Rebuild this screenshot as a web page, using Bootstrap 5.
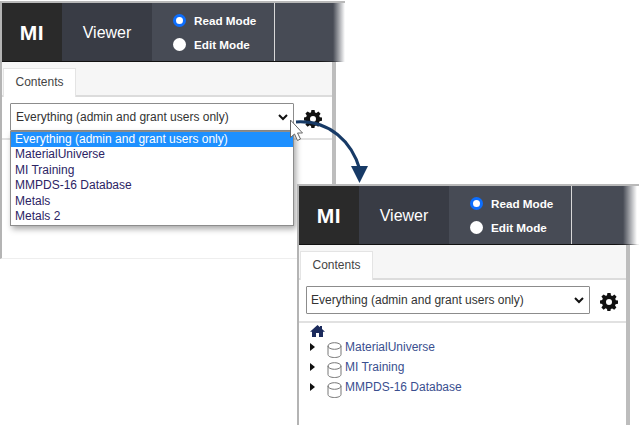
<!doctype html>
<html lang="en"><head><meta charset="utf-8"><title>MI Viewer</title>
<link href="https://cdn.jsdelivr.net/npm/bootstrap@5.3.0/dist/css/bootstrap.min.css" rel="stylesheet">
<style>
html,body{margin:0;background:#fff;width:639px;height:425px;overflow:hidden}
body{font-family:"Liberation Sans",Arial,sans-serif;position:relative}
.app-win{position:absolute;background:#fff;border-top:2px solid #b9b9b9}
.win-one{left:0;top:1px;width:345px;height:258px;border-left:2px solid #b4b4b4;border-bottom:1px solid #eee}
.win-two{left:297px;top:184px;width:342px;height:241px;border-left:2px solid #b4b4b4}
.app-head{height:59px;border-bottom:1px solid #111;border-image:linear-gradient(90deg,#111 315px,transparent 340px) 1}
.win-one .app-head{background:linear-gradient(90deg,#474b55 331px,#fff 343px)}
.win-two .app-head{background:linear-gradient(90deg,#474b55 324px,#fff 338px)}
.brand-box{width:60px;background:#2a2a2a;color:#fff;font-size:21px;font-weight:700;letter-spacing:.5px;padding-top:2px}
.view-box{width:90px;background:#393c45;color:#fff;font-size:16px;padding-top:1px}
.mode-box{width:123px;background:#474b55;border-right:1px solid #d8d8d8;color:#fff;font-size:11.700px;font-weight:700;padding:1px 0 0 21px;gap:6px}
.mode-dot{width:13px;height:13px;border-radius:50%;background:#fff;flex:none}
.mode-dot.on{border:3.500px solid #0d6efd}
.app-body{position:relative;height:196px;border-right:4px solid #bdbdbd;margin-right:9px}
.tab-strip{height:35px;background:#f6f6f6;border-bottom:2px solid #dcdcdc;padding:6px 0 0 1px}
.tab-one{width:73px;height:29px;background:#fff;border:1px solid #e4e4e4;border-bottom:0;font-size:12px;color:#444;line-height:26px;text-align:center}
.pick-row{height:43px;border-bottom:2px solid #e1e1e1;padding:6px 0 0 8px;background:#fff}
.win-two .pick-row{padding-left:7px}
.pick-box{width:284px;height:28px;border:1px solid #8c8c8c;font-size:12px;color:#333;padding:0 5px;background:#fff;border-radius:1px}
.win-two .pick-box{padding-left:4px}
.gear-icon{margin:7px 0 0 10px;flex:none}
.drop-list{position:absolute;left:8px;top:69px;width:284px;height:95px;background:#fff;border:1px solid #8d8d8d;box-shadow:2px 3px 6px rgba(0,0,0,.35);font-size:12px;color:#2c2464;line-height:15.400px}
.drop-list div{padding-left:4px;height:15.400px}
.drop-list .sel{background:#1e90ff;color:#fff}
.tree-area{padding:2px 0 0 11px;font-size:12px}
.tree-row{height:20px;color:#3a4f8f}
.tree-caret{width:0;height:0;border-left:5px solid #111;border-top:4px solid transparent;border-bottom:4px solid transparent;margin-right:12px}
.tree-cyl{margin:5px 3px 0 0;flex:none}
.arrow-art{position:absolute;left:285px;top:110px;pointer-events:none}
</style></head><body>

<section class="app-win win-one">
 <div class="app-head d-flex">
  <div class="brand-box d-flex align-items-center justify-content-center">MI</div>
  <div class="view-box d-flex align-items-center justify-content-center">Viewer</div>
  <div class="mode-box d-flex flex-column justify-content-center">
   <div class="d-flex align-items-center gap-2"><span class="mode-dot on"></span>Read Mode</div>
   <div class="d-flex align-items-center gap-2"><span class="mode-dot"></span>Edit Mode</div>
  </div>
 </div>
 <div class="app-body">
  <div class="tab-strip"><div class="tab-one">Contents</div></div>
  <div class="pick-row d-flex align-items-start">
   <div class="pick-box d-flex align-items-center justify-content-between">Everything (admin and grant users only)
    <svg width="10" height="7" viewBox="0 0 10 7"><path d="M1 1l4 4 4-4" fill="none" stroke="#111" stroke-width="2"/></svg></div>
   <svg class="gear-icon" width="18" height="18" viewBox="0 0 18 18"><path fill="#111" fill-rule="evenodd" d="M7.400 0h3.200l.4 2.400 1.400.6 2-1.400 2.200 2.200-1.400 2 .6 1.400 2.200.4v3.200l-2.400.4-.6 1.400 1.400 2-2.200 2.200-2-1.400-1.400.6-.4 2.300H7.400L7 15.900l-1.400-.6-2 1.400-2.200-2.200 1.400-2-.6-1.400L0 10.600V7.400L2.200 7l.6-1.400-1.400-2 2.200-2.200 2 1.400L7 2.400zM9 6a3 3 0 1 0 0 6 3 3 0 0 0 0-6z"/></svg>
  </div>
  <div class="drop-list">
   <div class="sel">Everything (admin and grant users only)</div>
   <div>MaterialUniverse</div><div>MI Training</div><div>MMPDS-16 Database</div><div>Metals</div><div>Metals 2</div>
  </div>
 </div>
</section>

<section class="app-win win-two">
 <div class="app-head d-flex">
  <div class="brand-box d-flex align-items-center justify-content-center">MI</div>
  <div class="view-box d-flex align-items-center justify-content-center">Viewer</div>
  <div class="mode-box d-flex flex-column justify-content-center">
   <div class="d-flex align-items-center gap-2"><span class="mode-dot on"></span>Read Mode</div>
   <div class="d-flex align-items-center gap-2"><span class="mode-dot"></span>Edit Mode</div>
  </div>
 </div>
 <div class="app-body">
  <div class="tab-strip"><div class="tab-one">Contents</div></div>
  <div class="pick-row d-flex align-items-start">
   <div class="pick-box d-flex align-items-center justify-content-between">Everything (admin and grant users only)
    <svg width="10" height="7" viewBox="0 0 10 7"><path d="M1 1l4 4 4-4" fill="none" stroke="#111" stroke-width="2"/></svg></div>
   <svg class="gear-icon" width="18" height="18" viewBox="0 0 18 18"><path fill="#111" fill-rule="evenodd" d="M7.400 0h3.200l.4 2.400 1.400.6 2-1.400 2.200 2.200-1.400 2 .6 1.400 2.200.4v3.200l-2.400.4-.6 1.400 1.400 2-2.200 2.200-2-1.400-1.400.6-.4 2.300H7.400L7 15.900l-1.400-.6-2 1.400-2.200-2.200 1.400-2-.6-1.400L0 10.600V7.400L2.200 7l.6-1.400-1.400-2 2.200-2.200 2 1.400L7 2.400zM9 6a3 3 0 1 0 0 6 3 3 0 0 0 0-6z"/></svg>
  </div>
  <div class="tree-area">
   <svg class="d-block" width="15" height="12" viewBox="0 0 15 12"><path fill="#1b2a5c" d="M7.500 0l2.500 2.200V1h2v3l3 2.700h-2V12H9V8H6v4H2V6.700H0z"/></svg>
   <div class="tree-row d-flex align-items-center"><span class="tree-caret"></span><svg class="tree-cyl" width="15" height="16" viewBox="0 0 15 16"><g fill="none" stroke="#777"><ellipse cx="7.500" cy="4" rx="6.500" ry="3.300"/><path d="M1 4v8.500c0 1.800 2.900 3 6.500 3s6.500-1.200 6.500-3V4"/></g></svg><span>MaterialUniverse</span></div>
   <div class="tree-row d-flex align-items-center"><span class="tree-caret"></span><svg class="tree-cyl" width="15" height="16" viewBox="0 0 15 16"><g fill="none" stroke="#777"><ellipse cx="7.500" cy="4" rx="6.500" ry="3.300"/><path d="M1 4v8.500c0 1.800 2.900 3 6.500 3s6.500-1.200 6.500-3V4"/></g></svg><span>MI Training</span></div>
   <div class="tree-row d-flex align-items-center"><span class="tree-caret"></span><svg class="tree-cyl" width="15" height="16" viewBox="0 0 15 16"><g fill="none" stroke="#777"><ellipse cx="7.500" cy="4" rx="6.500" ry="3.300"/><path d="M1 4v8.500c0 1.800 2.900 3 6.500 3s6.500-1.200 6.500-3V4"/></g></svg><span>MMPDS-16 Database</span></div>
  </div>
 </div>
</section>

<svg class="arrow-art" width="95" height="85" viewBox="285 110 95 85">
 <path d="M296 122C330 120 352 142 360 170" fill="none" stroke="#173a66" stroke-width="3"/>
 <path d="M351 166h17l-8.500 17z" fill="#173a66"/>
 <path d="M290.500 120v17.500l4-3.500 3 6.500 3-1.500-3-6h5z" fill="#fff" stroke="#666" stroke-width="1"/>
</svg>
</body></html>
